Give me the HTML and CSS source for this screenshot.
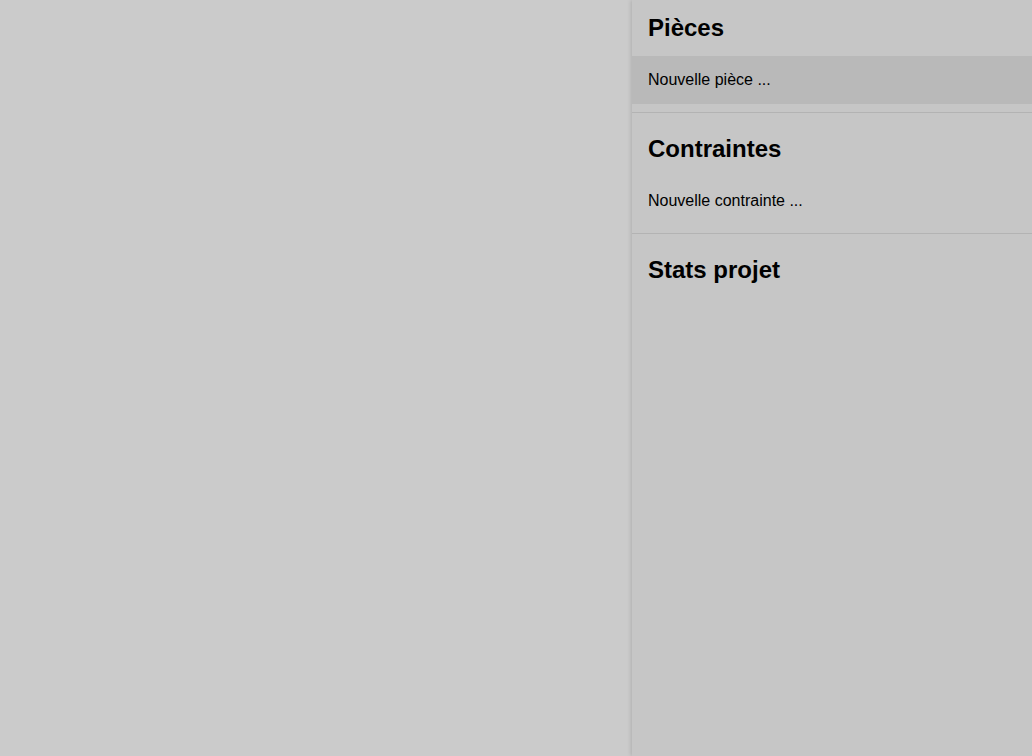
FILE: index.html
```html
<!DOCTYPE html>
<html lang="fr">
<head>
<meta charset="utf-8">
<title>Projet</title>
<link rel="stylesheet" href="styles.css">
</head>
<body>
<div class="app">
  <main class="canvas"></main>
  <aside class="panel">
    <section class="section first">
      <h2 class="title">Pièces</h2>
      <div class="item active">Nouvelle pièce ...</div>
    </section>
    <section class="section">
      <h2 class="title">Contraintes</h2>
      <div class="item">Nouvelle contrainte ...</div>
    </section>
    <section class="section last">
      <h2 class="title">Stats projet</h2>
    </section>
  </aside>
</div>
</body>
</html>
```

FILE: styles.css
```css
html, body {
  margin: 0;
  padding: 0;
  height: 100%;
}
body {
  font-family: "Liberation Sans", Arial, sans-serif;
  color: #000;
  background: #cbcbcb;
}
.app {
  display: flex;
  height: 100vh;
  overflow: hidden;
}
.canvas {
  flex: 1;
  background: #cbcbcb;
}
.panel {
  width: 400px;
  flex: none;
  background: #c6c6c6;
  box-shadow: -1px 0 4px rgba(0, 0, 0, 0.14);
  box-sizing: border-box;
  display: flex;
  flex-direction: column;
  z-index: 1;
}
.section {
  border-bottom: 1px solid #b3b3b3;
  padding-bottom: 8px;
}
.section.last {
  border-bottom: none;
}
.title {
  font-size: 24px;
  font-weight: bold;
  line-height: 28px;
  margin: 0;
  padding: 22px 16px 14px;
}
.first .title {
  padding-top: 14px;
}
.item {
  font-size: 16px;
  line-height: 48px;
  height: 48px;
  padding: 0 16px;
}
.item.active {
  background: #b9b9b9;
}
```
